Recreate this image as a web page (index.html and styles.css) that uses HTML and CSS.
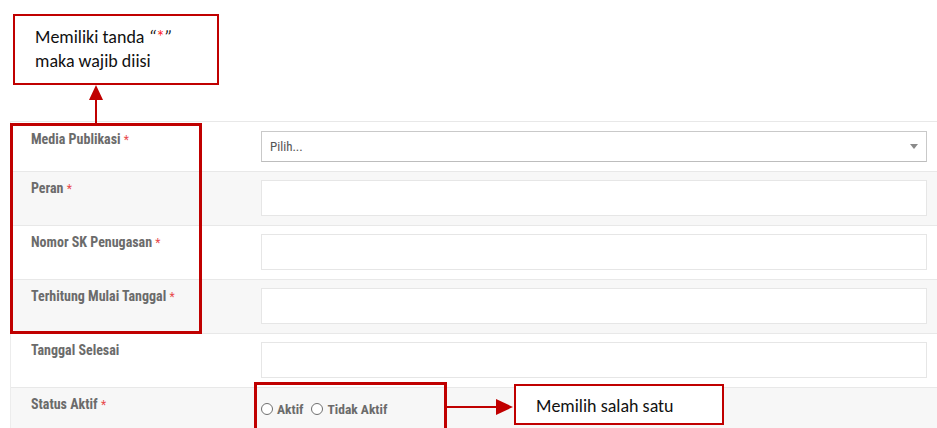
FILE: index.html
```html
<!DOCTYPE html>
<html lang="id">
<head>
<meta charset="utf-8">
<title>Form Penugasan</title>
<link rel="stylesheet" href="styles.css">
</head>
<body>
<div class="page">
  <div class="intro"></div>

  <form class="form">
    <div class="row">
      <div class="label">Media Publikasi <span class="req">*</span></div>
      <div class="field">
        <div class="select">
          <span class="select-text">Pilih...</span>
          <span class="caret"></span>
        </div>
      </div>
    </div>
    <div class="row alt">
      <div class="label">Peran <span class="req">*</span></div>
      <div class="field"><div class="input"></div></div>
    </div>
    <div class="row">
      <div class="label">Nomor SK Penugasan <span class="req">*</span></div>
      <div class="field"><div class="input"></div></div>
    </div>
    <div class="row alt">
      <div class="label">Terhitung Mulai Tanggal <span class="req">*</span></div>
      <div class="field"><div class="input"></div></div>
    </div>
    <div class="row">
      <div class="label">Tanggal Selesai</div>
      <div class="field"><div class="input"></div></div>
    </div>
    <div class="row alt">
      <div class="label">Status Aktif <span class="req">*</span></div>
      <div class="field radios">
        <span class="radio"><span class="dot"></span>Aktif</span>
        <span class="radio"><span class="dot"></span>Tidak Aktif</span>
      </div>
    </div>
  </form>

  <!-- annotation overlays -->
  <div class="note note-top">Memiliki tanda <i class="q">“</i><span class="star">*</span><i class="q">”</i><br>maka wajib diisi</div>
  <div class="arrow-up"><span class="head"></span><span class="shaft"></span></div>
  <div class="mark mark-labels"></div>
  <div class="mark mark-radios"></div>
  <div class="arrow-right"><span class="shaft"></span><span class="head"></span></div>
  <div class="note note-side">Memilih salah satu</div>
</div>
</body>
</html>
```

FILE: styles.css
```css
html, body {
  margin: 0;
  padding: 0;
  background: #ffffff;
}

.page {
  position: relative;
  width: 937px;
  height: 428px;
  overflow: hidden;
}

.intro {
  height: 121px;
}

/* form table */
.form {
  margin: 0 0 0 10px;
  border-left: 1px solid #ececec;
  font-family: "Liberation Sans Narrow", "Roboto Condensed", Roboto, sans-serif;
}

.row {
  display: grid;
  grid-template-columns: 230px 1fr;
  padding: 8px 10px 9px 20px;
  border-top: 1px solid #e8e8e8;
  background: #ffffff;
}

.row:first-child {
  padding: 9px 10px 9px 20px;
}

.row.alt {
  background: #f7f7f7;
}

.label {
  font-size: 14px;
  line-height: 16px;
  font-weight: 700;
  color: #6b6b6b;
}

.req {
  color: #e8494b;
  font-weight: 400;
  font-size: 12px;
}

.select {
  height: 31px;
  box-sizing: border-box;
  border: 1px solid #c9c9c9;
  border-bottom-color: #bdbdbd;
  background: #ffffff;
  display: flex;
  align-items: center;
  justify-content: space-between;
  padding: 0 8px 0 8px;
}

.select-text {
  font-size: 13px;
  color: #555555;
}

.caret {
  width: 0;
  height: 0;
  border-left: 4px solid transparent;
  border-right: 4px solid transparent;
  border-top: 5px solid #8a8a8a;
}

.input {
  height: 36px;
  box-sizing: border-box;
  border: 1px solid #e6e6e6;
  background: #ffffff;
}

.radios {
  display: flex;
  align-items: flex-start;
  gap: 8px;
  padding-top: 5px;
  height: 36px;
  box-sizing: border-box;
  font-size: 13.5px;
  line-height: 16px;
  font-weight: 700;
  color: #6b6b6b;
}

.radio {
  display: inline-flex;
  align-items: center;
  gap: 4px;
}

.dot {
  width: 10px;
  height: 10px;
  border: 1px solid #707070;
  border-radius: 50%;
  background: #ffffff;
}

/* annotations */
.note {
  position: absolute;
  box-sizing: border-box;
  border: 2px solid #c00000;
  background: #ffffff;
  font-family: Carlito, Lato, "Open Sans", sans-serif;
  color: #111111;
}

.note-top {
  left: 13px;
  top: 14px;
  width: 206px;
  height: 71px;
  padding: 9px 0 0 20px;
  font-size: 18px;
  line-height: 24px;
}

.q {
  font-style: italic;
}

.star {
  color: #ff1a1a;
}

.note-side {
  left: 514px;
  top: 384px;
  width: 210px;
  height: 41px;
  padding: 8px 0 0 20px;
  font-size: 18px;
  line-height: 24px;
}

.mark {
  position: absolute;
  box-sizing: border-box;
  border: 3px solid #c00000;
}

.mark-labels {
  left: 10px;
  top: 123px;
  width: 192px;
  height: 211px;
}

.mark-radios {
  left: 254px;
  top: 382px;
  width: 193px;
  height: 60px;
}

.arrow-up {
  position: absolute;
  left: 88px;
  top: 85px;
  width: 15px;
  height: 38px;
  display: flex;
  flex-direction: column;
  align-items: center;
}

.arrow-up .head {
  width: 0;
  height: 0;
  border-left: 7px solid transparent;
  border-right: 7px solid transparent;
  border-bottom: 15px solid #c00000;
}

.arrow-up .shaft {
  width: 2px;
  flex: 1;
  background: #c00000;
}

.arrow-right {
  position: absolute;
  left: 447px;
  top: 399px;
  width: 66px;
  height: 16px;
  display: flex;
  align-items: center;
}

.arrow-right .shaft {
  flex: 1;
  height: 2px;
  background: #c00000;
}

.arrow-right .head {
  width: 0;
  height: 0;
  border-top: 8px solid transparent;
  border-bottom: 8px solid transparent;
  border-left: 17px solid #c00000;
}
```
